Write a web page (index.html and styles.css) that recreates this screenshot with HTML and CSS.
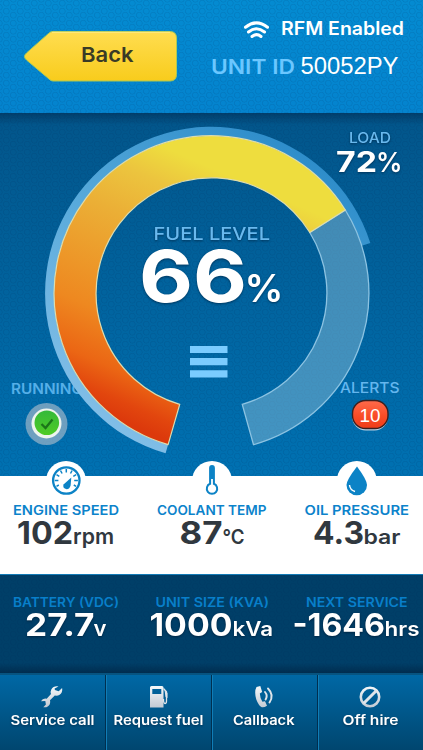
FILE: index.html
```html
<!DOCTYPE html>
<html lang="en">
<head>
<meta charset="utf-8">
<title>Unit 50052PY</title>
<link rel="stylesheet" href="styles.css">
</head>
<body>
<div class="screen">
  <header class="header">
    <svg class="back" viewBox="22 29 157 56">
      <defs><linearGradient id="gold" x1="0" y1="0" x2="0" y2="1"><stop offset="0" stop-color="#ffdd50"/><stop offset="1" stop-color="#f8cc1c"/></linearGradient></defs>
      <path d="M52.500 31.500H170q6.500 0 6.500 6.500V74.500q0 6.500-6.500 6.500H53q-2 0-4-2L26.500 60q-4-3.500 0-7L48.500 33.500q2-2 4-2z" fill="url(#gold)" stroke="#a9c958" stroke-width="1"/>
      <path d="M52 32.300H170" stroke="#ffec85"/>
      <text class="t semi" x="81" y="62" font-size="20.500" textLength="52.500" lengthAdjust="spacingAndGlyphs" fill="#3a3b26">Back</text>
    </svg>
    <svg class="unit" viewBox="205 15 210 66">
      <g fill="none" stroke="#fff" stroke-width="3" stroke-linecap="round"><path d="M245.500 27.200Q256.500 18.500 267.500 27.200"/><path d="M248.500 32Q256.500 25.500 264.500 32"/><path d="M252 36.500Q256.500 32.800 261 36.500"/></g>
      <text class="t semi" x="281" y="35" font-size="18" textLength="123" lengthAdjust="spacingAndGlyphs" fill="#fff">RFM Enabled</text>
      <text class="t semi" x="211" y="74" font-size="20.500" textLength="84" lengthAdjust="spacingAndGlyphs" fill="#6bc7ff">UNIT ID</text>
      <text class="h" x="300.500" y="74" font-size="23.500" textLength="98" lengthAdjust="spacingAndGlyphs" fill="#fff">50052PY</text>
    </svg>
  </header>

  <main class="gauge">
    <svg viewBox="0 112 423 364" width="423" height="364">
      <defs>
        <linearGradient id="heat" gradientUnits="userSpaceOnUse" x1="165" y1="450" x2="300" y2="140"><stop offset=".03" stop-color="#dc390c"/><stop offset=".08" stop-color="#e2460e"/><stop offset=".16" stop-color="#eb6614"/><stop offset=".3" stop-color="#ee8820"/><stop offset=".59" stop-color="#ebaf36"/><stop offset=".72" stop-color="#ecc43e"/><stop offset=".82" stop-color="#eedd3e"/></linearGradient>
        <linearGradient id="load" gradientUnits="userSpaceOnUse" x1="110" y1="450" x2="320" y2="150"><stop offset="0" stop-color="#86c0e8"/><stop offset=".5" stop-color="#58aadb"/><stop offset="1" stop-color="#2b8bc9"/></linearGradient>
        <linearGradient id="green" x1="0" y1="0" x2="0" y2="1"><stop offset="0" stop-color="#34b93a"/><stop offset="1" stop-color="#4fcb24"/></linearGradient>
        <linearGradient id="red" x1="0" y1="0" x2="0" y2="1"><stop offset="0" stop-color="#ff6b4b"/><stop offset=".55" stop-color="#f94c26"/><stop offset="1" stop-color="#ee3c18"/></linearGradient>
      </defs>
      <text class="t semi" x="11" y="393.500" font-size="14.500" textLength="72" lengthAdjust="spacingAndGlyphs" fill="#55afe8">RUNNING</text>
      <path d="M165.600 453.300A166.500 166.500 0 1 1 370.300 243L361.700 245.700A157.500 157.500 0 1 0 168.100 444.600z" fill="url(#load)"/>
      <path d="M345.300 210A157.500 157.500 0 0 1 253.500 444.700L242.200 404.300A115.500 115.500 0 0 0 309.800 232.500z" fill="#83b9d6" fill-opacity=".5" stroke="#8cc3e2" stroke-width="1.300"/>
      <path d="M168.100 444.600A157.500 157.500 0 1 1 345.300 210L309.800 232.500A115.500 115.500 0 1 0 179.700 404.300z" fill="url(#heat)" stroke="#dcdcae" stroke-width="1.200"/>
      <g class="shadow">
        <text class="t med" x="153.500" y="240" font-size="17.500" textLength="116.500" lengthAdjust="spacingAndGlyphs" fill="#69b9ee">FUEL LEVEL</text>
        <text class="t bold" x="139" y="302" font-size="72" textLength="108" lengthAdjust="spacingAndGlyphs" fill="#fff">66</text>
        <text class="t semi" x="244.500" y="301.500" font-size="38" textLength="39" lengthAdjust="spacingAndGlyphs" fill="#fff">%</text>
        <text class="t med" x="349" y="143" font-size="14.500" textLength="42" lengthAdjust="spacingAndGlyphs" fill="#69b9ee">LOAD</text>
        <text class="t bold" x="336" y="172" font-size="28" textLength="41" lengthAdjust="spacingAndGlyphs" fill="#fff">72</text>
        <text class="t semi" x="376" y="172" font-size="27" textLength="26.500" lengthAdjust="spacingAndGlyphs" fill="#fff">%</text>
      </g>
      <path d="M190 346h37.500v7H190zM190 358h37.500v7.300H190zM190 370.300h37.500v7.300H190z" fill="#7bccff"/>
      <text class="t med" x="340" y="393" font-size="14.500" textLength="59.500" lengthAdjust="spacingAndGlyphs" fill="#64b6ee">ALERTS</text>
      <circle cx="46.500" cy="424" r="21" fill="#a9bccb" fill-opacity=".65"/>
      <circle cx="46.500" cy="423.500" r="15" fill="#eef4ee"/>
      <circle cx="46.800" cy="422.800" r="12.300" fill="url(#green)"/>
      <path d="M41.500 424l4 4 7-8.500" fill="none" stroke="#1b7519" stroke-width="2.300"/>
      <rect x="352.200" y="402" width="35.800" height="28.500" rx="13.500" fill="#b7d0e2"/>
      <rect x="352.500" y="400.500" width="35.500" height="28" rx="13" fill="url(#red)" stroke="#3b2020" stroke-width="1.400"/>
      <text class="h" x="359.500" y="421.500" font-size="19" textLength="21" lengthAdjust="spacingAndGlyphs" fill="#fff">10</text>
    </svg>
  </main>

  <section class="stats">
    <svg viewBox="-7 460 145.500 114">
      <circle cx="66" cy="481" r="20"/>
      <circle cx="66.300" cy="480.500" r="13.200" fill="none" stroke="#0c83c6" stroke-width="2.300"/>
      <path d="M66.300 469v3.500M60.500 470.500l1.600 3M72.100 470.500l-1.600 3M56.500 474.700l2.800 1.700M76.100 474.700l-2.800 1.700M54.700 480.500h3.700M77.900 480.500h-3.700M56.500 486.300l2.300-1.300M76.100 486.300l-2.300-1.300" stroke="#0c83c6" stroke-width="1.500"/>
      <path d="M71.300 477.500l-.7 8q-1 4-4.600 3.600-4-1.300-2.200-4.800z" fill="#0c83c6"/>
      <text class="t semi" x="13" y="515" font-size="13.200" textLength="106" lengthAdjust="spacingAndGlyphs" fill="#0c83cb">ENGINE SPEED</text>
      <text class="t bold" x="17" y="544" font-size="31" textLength="56" lengthAdjust="spacingAndGlyphs" fill="#30383f">102</text>
      <text class="t semi" x="73" y="544" font-size="21" textLength="41" lengthAdjust="spacingAndGlyphs" fill="#30383f">rpm</text>
    </svg>
    <svg viewBox="138.500 460 145.500 114">
      <circle cx="211.500" cy="481" r="20"/>
      <path d="M209.600 468q0-2 1.900-2t1.900 2V483.800a5.200 5.200 0 1 1-3.800 0z" fill="#fff" stroke="#0c83c6" stroke-width="2"/>
      <path d="M211.500 466v13" stroke="#0c83c6" stroke-width="3"/>
      <text class="t semi" x="156.500" y="515" font-size="13.200" textLength="109.500" lengthAdjust="spacingAndGlyphs" fill="#0c83cb">COOLANT TEMP</text>
      <text class="t bold" x="179" y="544" font-size="31" textLength="43" lengthAdjust="spacingAndGlyphs" fill="#30383f">87</text>
      <text class="t semi" x="222" y="544" font-size="20" textLength="22" lengthAdjust="spacingAndGlyphs" fill="#30383f">°C</text>
    </svg>
    <svg viewBox="284 460 145.500 114">
      <circle cx="356.800" cy="481" r="20"/>
      <path d="M357 466.500q10 13.500 10 18.500a10 10 0 0 1-20.500 0q0-5 10.500-18.500z" fill="#0c83c6"/>
      <path d="M349.500 485q.5 5 5.500 6.500" fill="none" stroke="#fff" stroke-width="1.400"/>
      <text class="t semi" x="304.500" y="515" font-size="13.200" textLength="104.500" lengthAdjust="spacingAndGlyphs" fill="#0c83cb">OIL PRESSURE</text>
      <text class="t bold" x="313" y="544" font-size="31" textLength="51" lengthAdjust="spacingAndGlyphs" fill="#30383f">4.3</text>
      <text class="t semi" x="363.500" y="544" font-size="20" textLength="37" lengthAdjust="spacingAndGlyphs" fill="#30383f">bar</text>
    </svg>
  </section>

  <section class="specs">
    <svg viewBox="-7 575 145.500 98">
      <text class="t semi" x="13" y="607" font-size="12.800" textLength="106" lengthAdjust="spacingAndGlyphs">BATTERY (VDC)</text>
      <g class="value"><text class="t bold" x="25" y="636" font-size="31" textLength="69.500" lengthAdjust="spacingAndGlyphs">27.7</text>
      <text class="t semi" x="93.500" y="636" font-size="21" textLength="13" lengthAdjust="spacingAndGlyphs">v</text></g>
    </svg>
    <svg viewBox="138.500 575 145.500 98">
      <text class="t semi" x="155" y="607" font-size="12.800" textLength="113.500" lengthAdjust="spacingAndGlyphs">UNIT SIZE (KVA)</text>
      <g class="value"><text class="t bold" x="149" y="636" font-size="31" textLength="83" lengthAdjust="spacingAndGlyphs">1000</text>
      <text class="t semi" x="232" y="636" font-size="20" textLength="40.500" lengthAdjust="spacingAndGlyphs">kVa</text></g>
    </svg>
    <svg viewBox="284 575 145.500 98">
      <text class="t semi" x="306" y="607" font-size="12.800" textLength="101.500" lengthAdjust="spacingAndGlyphs">NEXT SERVICE</text>
      <g class="value"><text class="t bold" x="292.500" y="636" font-size="31" textLength="92.500" lengthAdjust="spacingAndGlyphs">-1646</text>
      <text class="t semi" x="384.500" y="636" font-size="20" textLength="35" lengthAdjust="spacingAndGlyphs">hrs</text></g>
    </svg>
  </section>

  <nav class="tabs">
    <a><svg viewBox="0 675 105 75">
      <defs><linearGradient id="silver" gradientUnits="userSpaceOnUse" x1="0" y1="686" x2="0" y2="708"><stop offset="0" stop-color="#f4f8fa"/><stop offset="1" stop-color="#c2c9d2"/></linearGradient></defs>
      <path d="M58.500 686.500q-5-.8-7.200 3-1.300 2.500-.3 4.500l-4.300 4.700q-4-.8-5.700 2.600l4.300-.2.600 3.400-2.600 2.700q4.500.8 6.500-3 .8-2 .2-4l4.800-4.700q5 .8 7-3.300.8-2 .3-4.200l-3.400 3.200-3.800-1.100-.3-1.600z" fill="url(#silver)"/>
      <text class="t semi" x="10.500" y="724.500" font-size="13.200" textLength="84" lengthAdjust="spacingAndGlyphs">Service call</text></svg></a>
    <a><svg viewBox="106 675 105 75">
      <path fill-rule="evenodd" d="M151.500 686h10.500q1.500 0 1.500 1.500V707.500H150V687.500q0-1.500 1.500-1.500zM152.300 689v5h9v-5z" fill="url(#silver)"/>
      <path d="M163.500 688.500l3 3.300v9.200q0 2.500-1.500 2.500t-1.500-4.500M166.500 694v-2.500" fill="none" stroke="#dfe5ea" stroke-width="1.300"/><path d="M164.500 690l3 3v5l-2-1z" fill="#dfe5ea"/>
      <text class="t semi" x="113.500" y="724.500" font-size="13.200" textLength="90" lengthAdjust="spacingAndGlyphs">Request fuel</text></svg></a>
    <a><svg viewBox="212 675 105 75">
      <path d="M256.500 687l3.800-1 1.900 6-2.400 1.500q.3 5 2.600 8.200l2.600-.5 2 4.500q-3 2-5.200 1.500-3.200-1.500-5.500-7.700-2.300-8 .2-12.500z" fill="url(#silver)"/>
      <path d="M265 692q3 3.500 .6 7.500M268 688.500q6.500 6.500 1.500 14" fill="none" stroke="#dfe5ea" stroke-width="1.900" stroke-linecap="round"/>
      <text class="t semi" x="233" y="724.500" font-size="13.200" textLength="61.500" lengthAdjust="spacingAndGlyphs">Callback</text></svg></a>
    <a><svg viewBox="318 675 105 75">
      <circle cx="370" cy="697" r="9.200" fill="none" stroke="url(#silver)" stroke-width="2.600"/><path d="M363.500 703.500l13-13" stroke="#dfe5ea" stroke-width="3"/>
      <text class="t semi" x="342.500" y="724.500" font-size="13.200" textLength="56" lengthAdjust="spacingAndGlyphs">Off hire</text></svg></a>
  </nav>
</div>
</body>
</html>
```
FILE: styles.css
```css
* { box-sizing: border-box; }
body { margin: 0; background: #00487a; }
svg { display: block; flex: none; overflow: visible; }
.t { font-family: Inter, "Liberation Sans", sans-serif; }
.h { font-family: "Liberation Sans", sans-serif; }
.med { font-weight: 500; }
.semi { font-weight: 600; }
.bold { font-weight: 700; }
.screen { width: 423px; height: 750px; overflow: hidden; display: flex; flex-direction: column; }
.header, .gauge, .specs {
  --bumps:
    radial-gradient(circle at 45% 40%, transparent 2px, rgba(0, 35, 80, .12) 3px, transparent 3.600px),
    radial-gradient(circle at 45% 40%, transparent 2px, rgba(0, 35, 80, .12) 3px, transparent 3.600px);
}
.header {
  height: 113px; flex: none; display: flex; justify-content: space-between;
  padding: 15px 8px 0 22px;
  background: var(--bumps), linear-gradient(#048bd1, #0483ce);
  background-size: 14px 8px, 14px 8px, auto;
  background-position: 0 0, 7px 4px, 0 0;
}
.back { width: 157px; height: 56px; margin-top: 14px; }
.unit { width: 210px; height: 66px; }
.gauge {
  height: 363px; flex: none; margin: 0;
  background: var(--bumps), linear-gradient(rgba(0, 35, 70, .45), transparent 12px), linear-gradient(#02558a, #0071b2);
  background-size: 14px 8px, 14px 8px, auto, auto;
  background-position: 0 0, 7px 4px, 0 0, 0 0;
}
.gauge svg { margin-top: -1px; }
.shadow { filter: drop-shadow(0 1px 1px rgba(0, 30, 60, .65)); }
.stats { height: 98px; flex: none; display: flex; margin: 0 -7px; background: #fff; }
.stats svg { width: 145.500px; height: 114px; margin-top: -16px; fill: #fff; }
.specs {
  height: 99px; flex: none; display: flex; padding: 0; margin: 0 -7px;
  border-top: 1px solid #137bb6;
  background: var(--bumps), linear-gradient(transparent 88px, rgba(0, 28, 55, .5) 98px), #003f68;
  background-size: 14px 8px, 14px 8px, auto, auto;
  background-position: 0 0, 7px 4px, 0 0, 0 0;
}
.specs svg { width: 145.500px; height: 98px; fill: #087fca; }
.value { fill: #fff; filter: drop-shadow(0 1px 1px rgba(0, 20, 40, .6)); }
.tabs {
  height: 77px; flex: none; display: grid; grid-template-columns: repeat(3, 106px) 105px;
  border-top: 2px solid #075480;
  background: linear-gradient(#0068a5, #00466f);
}
.tabs a { border-right: 1px solid #002f50; box-shadow: inset 1px 0 #117db6; }
.tabs a:first-child { box-shadow: none; }
.tabs a:last-child { border-right: 0; }
.tabs svg { width: 105px; height: 75px; fill: #fff; }
.tabs text { filter: drop-shadow(0 1px 1px rgba(0, 20, 40, .5)); }
```
